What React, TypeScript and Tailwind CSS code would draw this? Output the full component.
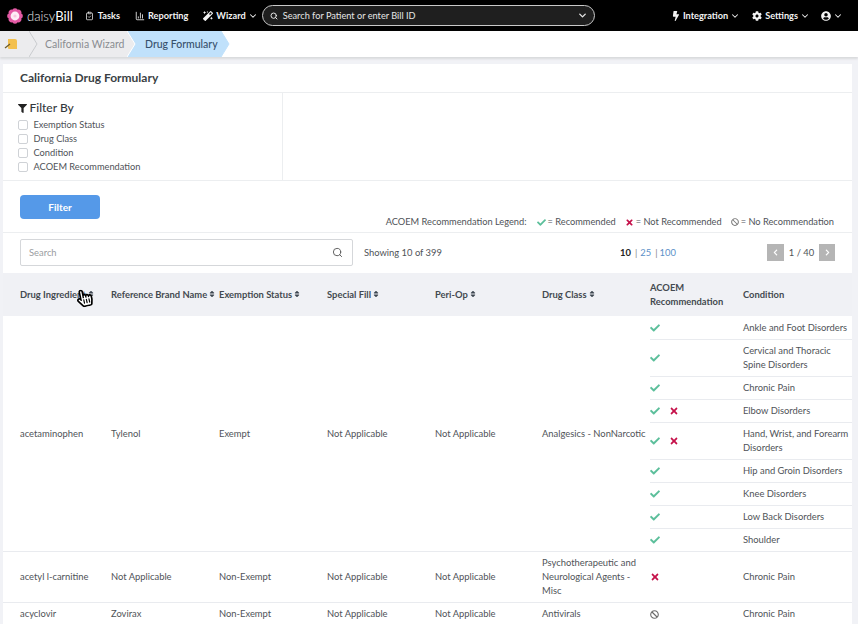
import React from "react";
import { FaCheck, FaTimes, FaBan, FaFilter, FaBolt, FaCog, FaUserCircle, FaMagic, FaSort, FaChevronLeft, FaChevronRight, FaHandPointer, FaRegHandPointer } from "react-icons/fa";
import { ChevronDown, Search, ClipboardCheck, BarChart3 } from "lucide-react";

const Caret = () => <ChevronDown className="w-[10px] h-[10px] ml-[2px]" strokeWidth={2.5} />;

const Logo = () => (
  <svg width="16" height="16" viewBox="0 0 16 16">
    {[0, 45, 90, 135, 180, 225, 270, 315].map((a) => (
      <circle key={a} cx="8" cy="3" r="2.8" fill="#e35aa4" transform={`rotate(${a} 8 8)`} />
    ))}
    <circle cx="8" cy="8" r="4.4" fill="#fdeef6" />
    <circle cx="8" cy="8" r="1.6" fill="#f7c9e0" />
  </svg>
);

const Sort = () => <FaSort className="inline-block w-[8px] h-[8px] ml-[1px] align-[-0.5px] text-[#3d4650]" />;
const Ok = () => <FaCheck className="w-[10px] h-[10px] text-[#5cbf9b]" />;
const No = () => <FaTimes className="w-[10px] h-[10px] text-[#c5114a]" />;
const None = () => <FaBan className="w-[9px] h-[9px] text-[#6b6b6b]" />;

const Chevron = ({ fill, stroke, bg }: { fill: string; stroke: string; bg: string }) => (
  <svg width="9" height="26" viewBox="0 0 9 26" className="shrink-0" style={{ background: bg }}>
    <path d="M0 0 L8 13 L0 26 Z" fill={fill} />
    <path d="M0 0 L8 13 L0 26" fill="none" stroke={stroke} strokeWidth="1" />
  </svg>
);

const subRows: { icons: React.ReactNode[]; text: string }[] = [
  { icons: [<Ok key="a" />], text: "Ankle and Foot Disorders" },
  { icons: [<Ok key="a" />], text: "Cervical and Thoracic Spine Disorders" },
  { icons: [<Ok key="a" />], text: "Chronic Pain" },
  { icons: [<Ok key="a" />, <No key="b" />], text: "Elbow Disorders" },
  { icons: [<Ok key="a" />, <No key="b" />], text: "Hand, Wrist, and Forearm Disorders" },
  { icons: [<Ok key="a" />], text: "Hip and Groin Disorders" },
  { icons: [<Ok key="a" />], text: "Knee Disorders" },
  { icons: [<Ok key="a" />], text: "Low Back Disorders" },
  { icons: [<Ok key="a" />], text: "Shoulder" },
];

const Sub = ({ icons, text, last }: { icons: React.ReactNode[]; text: string; last?: boolean }) => (
  <div className={`flex items-center ${last ? "" : "border-b border-[#e9ebef]"}`}>
    <div className="w-[93px] shrink-0 flex items-center gap-[9px]">{icons}</div>
    <div className="flex-1 py-[4px]">{text}</div>
  </div>
);

const cols = "grid grid-cols-[91px_108px_108px_108px_107px_108px_202px] pl-[17px] items-center";

const Row = ({ c, sub, cls }: { c: string[]; sub: React.ReactNode; cls?: string }) => (
  <div className={`${cols} ${cls ?? ""}`}>
    {c.map((t, i) => (
      <div key={i} className="py-[4px] pr-[2px]">{t}</div>
    ))}
    <div className="self-stretch flex flex-col justify-center">{sub}</div>
  </div>
);

const Th = ({ children }: { children: React.ReactNode }) => (
  <div className="whitespace-nowrap">
    {children}
    <Sort />
  </div>
);

const Filter = ({ label }: { label: string }) => (
  <label className="flex items-center h-[14px] text-[9.25px]">
    <span className="w-[10px] h-[10px] border border-[#cfd2d6] rounded-[2px] bg-white mr-[6px]" />
    {label}
  </label>
);

export default function App() {
  return (
    <div
      className="relative w-[858px] h-[624px] overflow-hidden bg-[#f1f2f6] text-[#4f5358] text-[9.4px] leading-[14px]"
      style={{ fontFamily: '"Lato", "Liberation Sans", sans-serif' }}
    >
      <header className="h-[31px] bg-black text-[#f2f2f2] flex items-center font-bold text-[9.2px]">
        <div className="ml-[7px] flex items-center">
          <Logo />
          <span className="ml-[4px] text-[13px] font-light text-[#e8e8e8]">daisy<span className="font-normal text-white">Bill</span></span>
        </div>
        <div className="ml-[12px] flex items-center">
          <ClipboardCheck className="w-[9px] h-[10px] mr-[4px]" />Tasks
        </div>
        <div className="ml-[15px] flex items-center">
          <BarChart3 className="w-[10px] h-[10px] mr-[3px]" />Reporting
        </div>
        <div className="ml-[15px] flex items-center">
          <FaMagic className="w-[10px] h-[10px] mr-[3px]" />Wizard<Caret />
        </div>
        <div className="ml-[4px] w-[333px] h-[21px] rounded-full border border-[#c9c9c9] bg-[#1f1f1f] flex items-center pl-[7px] pr-[6px] font-normal text-[#e6e6e6]">
          <Search className="w-[8px] h-[8px] mr-[5px]" strokeWidth={3} />
          <span className="flex-1">Search for Patient or enter Bill ID</span>
          <ChevronDown className="w-[11px] h-[11px]" strokeWidth={3} />
        </div>
        <div className="ml-auto flex items-center">
          <FaBolt className="w-[8px] h-[10px] mr-[3px]" />Integration<Caret />
          <FaCog className="w-[10px] h-[10px] ml-[12px] mr-[3px]" />Settings<Caret />
          <FaUserCircle className="w-[10px] h-[10px] ml-[11px]" /><Caret />
          <span className="w-[15px]" />
        </div>
      </header>

      <nav className="h-[26px] bg-white flex items-center text-[10.5px] shadow-[0_2px_2px_#d9dadc] relative">
        <div className="h-full w-[29px] bg-[#ececee] flex items-center pl-[4px]">
          <svg width="14" height="13" viewBox="0 0 14 13">
            <path d="M4 1 H11 Q13 1 13 3 V11 H5 Q4 11 4 10 Z" fill="#f3c04f" />
            <path d="M1 10 L6 6" stroke="#6b5a2a" strokeWidth="1.2" />
          </svg>
        </div>
        <Chevron fill="#ececee" stroke="#c9cbce" bg="#ececee" />
        <div className="h-full w-[89px] bg-[#ececee] flex items-center pl-[7px] text-[#8a8d91]">California Wizard</div>
        <Chevron fill="#ececee" stroke="#ffffff" bg="#c0e1fb" />
        <div className="h-full w-[85px] bg-[#c0e1fb] flex items-center pl-[9px] font-medium text-[#37506b]">Drug Formulary</div>
        <Chevron fill="#c0e1fb" stroke="#c0e1fb" bg="#ffffff" />
      </nav>

      <main className="mt-[7px] ml-[3px] w-[849px] h-[600px] bg-white">
        <h1 className="h-[29px] pl-[17px] flex items-center text-[12px] font-bold text-[#3a3f44] border-b border-[#eceef0]">California Drug Formulary</h1>
        <section className="h-[88px] flex border-b border-[#eceef0]">
          <div className="w-[280px] border-r border-[#eceef0] pl-[14.5px] pt-[8px]">
            <div className="flex items-center text-[12px] leading-[14px] text-[#33383d] font-medium mb-[2.5px]">
              <FaFilter className="w-[9px] h-[9px] mr-[3px] text-[#222]" />Filter By
            </div>
            <Filter label="Exemption Status" />
            <Filter label="Drug Class" />
            <Filter label="Condition" />
            <Filter label="ACOEM Recommendation" />
          </div>
        </section>
        <section className="relative h-[52px] border-b border-[#eceef0]">
          <button className="absolute left-[17px] top-[14px] w-[80px] h-[24px] rounded-[4px] bg-[#5599e8] text-white font-bold text-[10px]">Filter</button>
          <div className="absolute right-[18px] top-[34px] flex items-center text-[9.25px]">
            ACOEM Recommendation Legend:
            <FaCheck className="w-[9px] h-[9px] ml-[10px] mr-[2px] text-[#5cbf9b]" />= Recommended
            <FaTimes className="w-[9px] h-[9px] ml-[9px] mr-[2px] text-[#c5114a]" />= Not Recommended
            <FaBan className="w-[8px] h-[8px] ml-[9px] mr-[2px] text-[#777]" />= No Recommendation
          </div>
        </section>
        <section className="h-[40px] flex items-center pl-[17px] pr-[17px] pb-[1px]">
          <div className="w-[333px] h-[27px] border border-[#d5d7da] rounded-[2px] flex items-center pl-[8px] pr-[9px] text-[#9a9da1]">
            <span className="flex-1">Search</span>
            <Search className="w-[11px] h-[11px] text-[#555]" />
          </div>
          <span className="ml-[11px] w-[256px]">Showing 10 of 399</span>
          <span className="w-[135px] flex items-center">
            <b className="text-[#222]">10</b>
            <span className="ml-[4px] text-[#888]">|</span>
            <span className="ml-[3px] text-[#5b90c8]">25</span>
            <span className="ml-[4px] text-[#888]">|</span>
            <span className="ml-[2px] text-[#5b90c8]">100</span>
          </span>
          <div className="ml-auto flex items-center">
            <span className="w-[17px] h-[17px] bg-[#b5b5b5] text-white flex items-center justify-center"><FaChevronLeft className="w-[7px] h-[7px]" /></span>
            <span className="w-[35px] text-center">1 / 40</span>
            <span className="w-[16px] h-[17px] bg-[#b5b5b5] text-white flex items-center justify-center"><FaChevronRight className="w-[7px] h-[7px]" /></span>
          </div>
        </section>

        <div className={`${cols} h-[43px] bg-[#f0f1f5] font-bold text-[#444a50]`}>
          <Th>Drug Ingredient</Th>
          <Th>Reference Brand Name</Th>
          <Th>Exemption Status</Th>
          <Th>Special Fill</Th>
          <Th>Peri-Op</Th>
          <Th>Drug Class</Th>
          <div className="flex items-center">
            <div className="w-[93px]">ACOEM<br />Recommendation</div>
            <div>Condition</div>
          </div>
        </div>

        <Row
          cls="border-b border-[#e9ebef] pt-[1px]"
          c={["acetaminophen", "Tylenol", "Exempt", "Not Applicable", "Not Applicable", "Analgesics - NonNarcotic"]}
          sub={subRows.map((r, i) => (
            <Sub key={r.text} icons={r.icons} text={r.text} last={i === subRows.length - 1} />
          ))}
        />
        <Row
          cls="border-b border-[#e9ebef]"
          c={["acetyl l-carnitine", "Not Applicable", "Non-Exempt", "Not Applicable", "Not Applicable", "Psychotherapeutic and Neurological Agents - Misc"]}
          sub={<Sub icons={[<No key="n" />]} text="Chronic Pain" last />}
        />
        <Row
          c={["acyclovir", "Zovirax", "Non-Exempt", "Not Applicable", "Not Applicable", "Antivirals"]}
          sub={<Sub icons={[<None key="n" />]} text="Chronic Pain" last />}
        />
      </main>

      <div className="absolute left-[76px] top-[289px] w-[17px] h-[18px] -rotate-12">
        <FaHandPointer className="absolute inset-0 w-full h-full text-white" />
        <FaRegHandPointer className="absolute inset-0 w-full h-full text-black" />
      </div>
    </div>
  );
}
